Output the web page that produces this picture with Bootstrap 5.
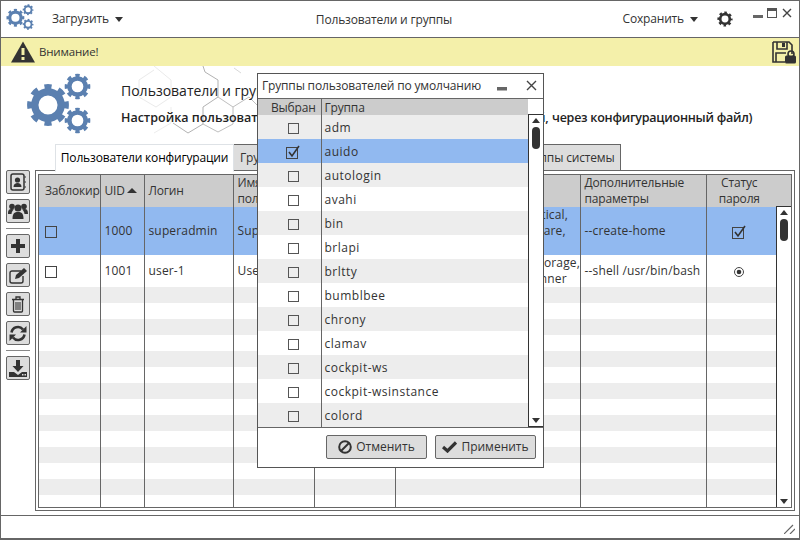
<!DOCTYPE html>
<html lang="ru">
<head>
<meta charset="utf-8">
<title>Пользователи и группы</title>
<link href="https://cdn.jsdelivr.net/npm/bootstrap@5.3.0/dist/css/bootstrap.min.css" rel="stylesheet">
<style>
html,body{margin:0;height:540px;overflow:hidden;background:#fff}
body{font-family:"Open Sans","Liberation Sans",sans-serif;font-size:12px;color:#333;letter-spacing:-.17px}
.win{width:800px;height:540px;border:1px solid #666;border-top-width:1px;border-bottom-width:2px;position:relative;overflow:hidden}
.topbar{height:37px;border-bottom:1px solid #666;padding:0 7px 0 5px}
.logo{width:30px;height:30px;margin-right:15px}
.caret-d{display:inline-block;width:0;height:0;border-left:4.5px solid transparent;border-right:4.5px solid transparent;border-top:5px solid #333}
.ttl{left:0;right:32px;text-align:center;position:absolute;top:10px}
.warnbar{height:28px;background:#f4f0aa;padding:0 2px 0 10px;font-size:11.5px}
.hero{height:78px;position:relative}
.herobg{position:absolute;left:120px;top:0;opacity:.75}
.biggear{position:absolute;left:25px;top:7px;width:70px;height:70px}
.h1x{position:absolute;left:120px;top:14px;font-size:14px;color:#222;letter-spacing:0}
.h2x{position:absolute;left:120px;top:43px;font-size:12.5px;font-weight:600;color:#222;white-space:nowrap;letter-spacing:0}
.h2tail{letter-spacing:-.25px}
.tabsx{margin-left:54px;border-bottom:0;height:26px;flex-wrap:nowrap}
.tabsx .nav-link{height:27px;border:1px solid #666;border-radius:0;background:#ddd;color:#333;padding:4px 0 0;text-align:center;font-size:12px;margin:0;white-space:nowrap;overflow:hidden}
.tabsx .nav-link.active{background:#fff;border-bottom-color:#fff;position:relative;z-index:2;height:28px}
.t1{width:179px}.t2{width:150px;margin-left:-1px!important;text-align:left!important;padding-left:6px!important}.t3{width:133px;margin-left:-1px!important}.t4{width:107px;margin-left:-1px!important}
.mainx{height:341px}
.toolx{width:34px;padding:0 5px 0 5px}
.tbtn{width:24px;height:24px;padding:0;background:#ddd;border:1px solid #666;border-radius:2px;display:flex;align-items:center;justify-content:center;flex:none}
.tsep{height:1px;background:#888;margin:0}
.toolcol{gap:5px}
.panelx{width:760px;height:341px;border:1px solid #666;padding:3px 2px 2px;position:relative}
.gridwrap{height:334px;border:1px solid #666;overflow:hidden;position:relative;padding:0}
.ut{table-layout:fixed;width:752px;margin:0;border-collapse:collapse;color:#333;font-size:12px}
.ut th,.ut td{padding:0 4px;border:0;border-left:1px solid #666;vertical-align:middle;white-space:nowrap;overflow:hidden;line-height:16px;font-weight:400;box-shadow:none}
.ut th:first-child,.ut td:first-child{border-left:0;padding-left:6px}
.ut thead th{height:32px;background:#ccc;color:#333}
.ut td{height:16px;background:#fff;letter-spacing:.15px}
.ut tr.gy td{background:#ededed}
.ut tr.sel td{background:#91b9f0;height:48px}
.ut tr.usr td{height:32px}
.ut .ctr,.ut th.ctr{text-align:center;padding-left:0;padding-right:19px}
.chk{display:inline-block;width:12px;height:12px;border:1px solid #444;vertical-align:middle;background:transparent;position:relative}
.chk.lt{border-color:#555;width:11px;height:11px}
.sortc{display:inline-block;width:0;height:0;border-left:5px solid transparent;border-right:5px solid transparent;border-bottom:5px solid #333;vertical-align:2px;margin-left:2px}
.sbar{position:absolute;width:16px;background:#fff;border:1px solid #333}
.sbar-main{left:737px;top:31px;height:302px}
.sbar-dlg{left:270px;top:15px;height:313px}
.thumb{position:absolute;left:3px;top:12px;width:8px;height:22px;border-radius:4px;background:#333}
.arrow-up,.arrow-dn{position:absolute;left:3px;width:0;height:0;border-left:4px solid transparent;border-right:4px solid transparent}
.arrow-up{top:3px;border-bottom:5px solid #333}
.arrow-dn{bottom:3px;border-top:5px solid #333}
.statusx{position:absolute;left:0;right:0;top:514px;height:24px;border-top:1px solid #666}
.grip{position:absolute;right:4px;top:8px}
.dlg{position:absolute;left:256px;top:72px;width:287px;height:395px;background:#fff;border:1px solid #555;z-index:5}
.dlghead{height:25px;border-bottom:1px solid #666;padding:0 6px 0 4px;font-size:12px;color:#333}
.dlgbody{height:328px;overflow:hidden}
.gt{table-layout:fixed;width:270px;margin:0;border-collapse:collapse;font-size:12px;color:#333}
.gt th,.gt td{padding:1px 3px 0;border:0;border-left:1px solid #666;line-height:15px;vertical-align:middle;box-shadow:none;font-weight:400;color:#333}
.gt th:first-child,.gt td:first-child{border-left:0;text-align:center;padding-left:8px;padding-right:0}
.gt thead th{background:#ccc;height:16px}
.gt td{height:24px;background:#fff;letter-spacing:.5px}
.gt tr.gy td{background:#ededed}
.gt tr.sel td{background:#91b9f0}
.dlgfoot{height:39px;border-top:1px solid #666;padding:7px 7px 0 0;gap:8px;justify-content:flex-end}
.dbtn{width:101px;height:24px;padding:0;background:#ddd;border:1px solid #666;border-radius:2px;font-size:12px;color:#333;display:flex;align-items:center;justify-content:center;gap:4px;flex:none}
</style>
</head>
<body>
<svg width="0" height="0" style="position:absolute">
  <defs>
    <symbol id="gear" viewBox="-12 -12 24 24">
      <circle r="7.2" fill="none" stroke="currentColor" stroke-width="4"/>
      <circle r="9.6" fill="none" stroke="currentColor" stroke-width="3.6" pathLength="80" stroke-dasharray="5 5" stroke-dashoffset="2.5"/>
    </symbol>
    <symbol id="gears" viewBox="0 0 70 70">
      <use href="#gear" x="0" y="10" width="44" height="44"/>
      <use href="#gear" x="38" y="0" width="27" height="27"/>
      <use href="#gear" x="38" y="34" width="27" height="27"/>
    </symbol>
  </defs>
</svg>
<div class="win">
  <div class="topbar d-flex align-items-center position-relative">
    <svg class="logo" style="color:#5b80b0"><use href="#gears"/></svg>
    <span style="margin-left:1px;margin-right:6px">Загрузить</span><span class="caret-d"></span>
    <div class="ttl">Пользователи и группы</div>
    <div class="ms-auto d-flex align-items-center">
      <span style="margin-right:6px">Сохранить</span><span class="caret-d" style="margin-right:19px"></span>
      <svg width="16" height="16" style="color:#333;margin-right:59px"><use href="#gear"/></svg>
    </div>
    <svg width="40" height="12" class="position-absolute" style="right:6px;top:7px">
      <rect x="0" y="7" width="10" height="3" fill="#666"/>
      <rect x="14.5" y=".5" width="9" height="9" fill="#fff" stroke="#555"/><rect x="14" y="0" width="10" height="3" fill="#555"/>
      <path d="M30 1l8 8M38 1l-8 8" stroke="#444" stroke-width="1.4"/>
    </svg>
  </div>
  <div class="warnbar d-flex align-items-center">
    <svg width="24" height="22" viewBox="0 0 24 22" class="me-1"><path d="M12 0.5L24 21.5H0Z" fill="#333"/><rect x="10.5" y="7" width="3" height="7" fill="#f4f0aa"/><rect x="10.5" y="16" width="3" height="3" fill="#f4f0aa"/></svg>
    <span>Внимание!</span>
    <svg class="ms-auto" width="25" height="23" viewBox="0 0 25 23"><path d="M1 1H17L20 4V13M13 21H1V1" fill="none" stroke="#333" stroke-width="1.6"/><path d="M5 1V8H15V1" fill="none" stroke="#333" stroke-width="1.6"/><rect x="10" y="2" width="3" height="4" fill="#333"/><path d="M4 21V12H14" fill="none" stroke="#333" stroke-width="1.6"/><circle cx="19" cy="13" r="3" fill="none" stroke="#333" stroke-width="1.6"/><rect x="13" y="14.5" width="11" height="8" rx="1.5" fill="#333"/></svg>
  </div>
  <div class="hero">
    <svg class="herobg" width="260" height="78" viewBox="120 66 260 78" fill="none">
      <path d="M153 66l17 14 0 17-15 10-17-10 0-17 15-10" stroke="#e4e4e4"/>
      <path d="M170 107v16l-17 10" stroke="#e8e8e8"/>
      <path d="M202 66l2 6 13 8v17l-15 10v17l-15 9-15-10" stroke="#999"/>
      <path d="M217 97l15 10v17l-15 8-15-8" stroke="#aaa"/>
      <path d="M232 107l16-10 10 10" stroke="#aaa"/>
      <path d="M233 68l7 5" stroke="#ccc"/>
    </svg>
    <svg class="biggear" style="color:#5b80b0"><use href="#gears"/></svg>
    <div class="h1x">Пользователи и группы</div>
    <div class="h2x">Настройка пользователей и групп (и только новых пользователей, <span class="h2tail">через конфигурационный файл)</span></div>
  </div>
  <ul class="nav nav-tabs tabsx">
    <li class="nav-item"><a class="nav-link active t1" href="#">Пользователи конфигурации</a></li>
    <li class="nav-item"><a class="nav-link t2" href="#">Группы конфигурации</a></li>
    <li class="nav-item"><a class="nav-link t3" href="#">Пользователи системы</a></li>
    <li class="nav-item"><a class="nav-link t4" href="#">Группы системы</a></li>
  </ul>
  <div class="mainx d-flex">
    <div class="toolx d-flex flex-column toolcol">
      <button class="tbtn" type="button"><svg width="16" height="18" viewBox="0 0 16 18"><rect x="1" y="1" width="13" height="16" rx="2" fill="none" stroke="#333" stroke-width="1.5"/><path d="M14.5 4h1.5M14.5 9h1.5M14.5 14h1.5" stroke="#333"/><circle cx="7.5" cy="7" r="2.6" fill="#333"/><path d="M3.5 14c0-3 2-4 4-4s4 1 4 4z" fill="#333"/></svg></button>
      <button class="tbtn" type="button"><svg width="20" height="18" viewBox="0 0 20 18" fill="#333"><circle cx="10" cy="6" r="3.5"/><path d="M4.5 17c0-6 2-7 5.500-7s5.500 1 5.500 7z"/><circle cx="4" cy="4.500" r="2.800"/><path d="M0 12c0-4 1-5 4-5 .8 0 1.500.2 2 .5-1.500 1-2.300 2.500-2.500 4.500z"/><circle cx="16" cy="4.500" r="2.800"/><path d="M20 12c0-4-1-5-4-5-.8 0-1.500.2-2 .5 1.500 1 2.300 2.500 2.500 4.500z"/></svg></button>
      <div class="tsep"></div>
      <button class="tbtn" type="button"><svg width="16" height="16" viewBox="0 0 16 16"><path d="M6 1h4v5h5v4h-5v5H6v-5H1V6h5z" fill="#333"/></svg></button>
      <button class="tbtn" type="button"><svg width="18" height="17" viewBox="0 0 18 17"><path d="M12 4H3a2 2 0 0 0-2 2v8a2 2 0 0 0 2 2h9a2 2 0 0 0 2-2V9" fill="none" stroke="#333" stroke-width="1.4"/><path d="M6 12l1-4 8-7 3 3-8 7z" fill="#333"/></svg></button>
      <button class="tbtn" type="button"><svg width="14" height="17" viewBox="0 0 14 17" fill="none" stroke="#333"><path d="M1 3.500h12M5 3V1h4v2" stroke-width="1.300"/><path d="M2.500 4v11a1 1 0 0 0 1 1h7a1 1 0 0 0 1-1V4" stroke-width="1.300"/><path d="M5 6v8M7 6v8M9 6v8" stroke-width="1.100"/></svg></button>
      <button class="tbtn" type="button"><svg width="18" height="17" viewBox="0 0 18 17" fill="none" stroke="#333" stroke-width="2.600"><path d="M2.500 7.500A6.500 6.500 0 0 1 14 4.500"/><path d="M15.500 9.500A6.500 6.500 0 0 1 4 12.500"/><path d="M17.500 1v6.500H11z" fill="#333" stroke="none"/><path d="M.5 16V9.500H7z" fill="#333" stroke="none"/></svg></button>
      <div class="tsep"></div>
      <button class="tbtn" type="button"><svg width="18" height="17" viewBox="0 0 18 17"><path d="M7 0h4v6h3.500L9 12 3.500 6H7z" fill="#333"/><path d="M0 17v-5h5l4 3 4-3h5v5z" fill="#333"/><rect x="13" y="14" width="1.500" height="1.500" fill="#ddd"/><rect x="15.500" y="14" width="1.500" height="1.500" fill="#ddd"/></svg></button>
    </div>
    <div class="panelx">
      <div class="gridwrap">
        <table class="table ut">
          <colgroup><col style="width:61px"><col style="width:44px"><col style="width:89px"><col style="width:81px"><col style="width:81px"><col style="width:185px"><col style="width:126px"><col style="width:85px"></colgroup>
          <thead><tr><th>Заблокир</th><th>UID<span class="sortc"></span></th><th>Логин</th><th>Имя<br>пользователя</th><th>Домашний<br>каталог</th><th>Группы</th><th>Дополнительные<br>параметры</th><th class="ctr">Статус<br>пароля</th></tr></thead>
          <tbody>
            <tr class="sel"><td><span class="chk"></span></td><td>1000</td><td>superadmin</td><td>Superadmin</td><td></td><td>audio, kvm, wheel, lp, optical,<br>cdrom, lp, scanner, software,<br>users</td><td>--create-home</td><td class="ctr"><svg width="14" height="14" viewBox="0 0 14 14" fill="none"><rect x=".5" y="2.500" width="11" height="11" stroke="#444"/><path d="M3 7l3 4 7-10" stroke="#333" stroke-width="1.600"/></svg></td></tr>
            <tr class="usr"><td><span class="chk"></span></td><td>1001</td><td>user-1</td><td>User-1</td><td></td><td>audio, video, wheel, lp, storage,<br>users, plugdev, tape, scanner</td><td>--shell /usr/bin/bash</td><td class="ctr"><svg width="12" height="12" viewBox="0 0 12 12" fill="none"><circle cx="6" cy="6" r="4.500" stroke="#444"/><circle cx="6" cy="6" r="2.300" fill="#333"/></svg></td></tr>
            <tr class="gy"><td></td><td></td><td></td><td></td><td></td><td></td><td></td><td></td></tr>
            <tr><td></td><td></td><td></td><td></td><td></td><td></td><td></td><td></td></tr>
            <tr class="gy"><td></td><td></td><td></td><td></td><td></td><td></td><td></td><td></td></tr>
            <tr><td></td><td></td><td></td><td></td><td></td><td></td><td></td><td></td></tr>
            <tr class="gy"><td></td><td></td><td></td><td></td><td></td><td></td><td></td><td></td></tr>
            <tr><td></td><td></td><td></td><td></td><td></td><td></td><td></td><td></td></tr>
            <tr class="gy"><td></td><td></td><td></td><td></td><td></td><td></td><td></td><td></td></tr>
            <tr><td></td><td></td><td></td><td></td><td></td><td></td><td></td><td></td></tr>
            <tr class="gy"><td></td><td></td><td></td><td></td><td></td><td></td><td></td><td></td></tr>
            <tr><td></td><td></td><td></td><td></td><td></td><td></td><td></td><td></td></tr>
            <tr class="gy"><td></td><td></td><td></td><td></td><td></td><td></td><td></td><td></td></tr>
            <tr><td></td><td></td><td></td><td></td><td></td><td></td><td></td><td></td></tr>
            <tr class="gy"><td></td><td></td><td></td><td></td><td></td><td></td><td></td><td></td></tr>
            <tr><td></td><td></td><td></td><td></td><td></td><td></td><td></td><td></td></tr>
          </tbody>
        </table>
        <div class="sbar sbar-main"><span class="arrow-up"></span><span class="thumb"></span><span class="arrow-dn"></span></div>
      </div>
    </div>
  </div>
  <div class="statusx">
    <svg class="grip" width="11" height="10" viewBox="0 0 11 10" fill="none" stroke="#666" stroke-width="1.200"><path d="M0 10L9 1M6 10L11 5"/></svg>
  </div>
  <div class="dlg">
    <div class="dlghead d-flex align-items-center">
      <span>Группы пользователей по умолчанию</span>
      <svg class="ms-auto" width="40" height="12" viewBox="0 0 40 12" fill="none"><rect x="0" y="7" width="10" height="3.500" fill="#666"/><path d="M30 1l9 9M39 1l-9 9" stroke="#444" stroke-width="1.400"/></svg>
    </div>
    <div class="dlgbody position-relative">
      <table class="table gt">
        <colgroup><col style="width:63px"><col></colgroup>
        <thead><tr><th>Выбран</th><th>Группа</th></tr></thead>
        <tbody>
          <tr class="gy"><td><span class="chk lt"></span></td><td>adm</td></tr>
          <tr class="sel"><td><svg width="14" height="14" viewBox="0 0 14 14" fill="none"><rect x=".5" y="2.500" width="11" height="11" stroke="#444"/><path d="M3 7l3 4 7-10" stroke="#333" stroke-width="1.600"/></svg></td><td>auido</td></tr>
          <tr class="gy"><td><span class="chk lt"></span></td><td>autologin</td></tr>
          <tr><td><span class="chk lt"></span></td><td>avahi</td></tr>
          <tr class="gy"><td><span class="chk lt"></span></td><td>bin</td></tr>
          <tr><td><span class="chk lt"></span></td><td>brlapi</td></tr>
          <tr class="gy"><td><span class="chk lt"></span></td><td>brltty</td></tr>
          <tr><td><span class="chk lt"></span></td><td>bumblbee</td></tr>
          <tr class="gy"><td><span class="chk lt"></span></td><td>chrony</td></tr>
          <tr><td><span class="chk lt"></span></td><td>clamav</td></tr>
          <tr class="gy"><td><span class="chk lt"></span></td><td>cockpit-ws</td></tr>
          <tr><td><span class="chk lt"></span></td><td>cockpit-wsinstance</td></tr>
          <tr class="gy"><td><span class="chk lt"></span></td><td>colord</td></tr>
        </tbody>
      </table>
      <div class="sbar sbar-dlg"><span class="arrow-up"></span><span class="thumb"></span><span class="arrow-dn"></span></div>
    </div>
    <div class="dlgfoot d-flex">
      <button class="dbtn" type="button"><svg width="14" height="14" viewBox="0 0 14 14" fill="none" stroke="#333" stroke-width="2"><circle cx="7" cy="7" r="5.800"/><path d="M3 11L11 3"/></svg>Отменить</button>
      <button class="dbtn" type="button"><svg width="15" height="12" viewBox="0 0 15 12" fill="none" stroke="#333" stroke-width="3.200"><path d="M1 6l4.500 4L14 1.500"/></svg>Применить</button>
    </div>
  </div>
</div>
<script src="https://cdn.jsdelivr.net/npm/bootstrap@5.3.0/dist/js/bootstrap.bundle.min.js"></script>
</body>
</html>
